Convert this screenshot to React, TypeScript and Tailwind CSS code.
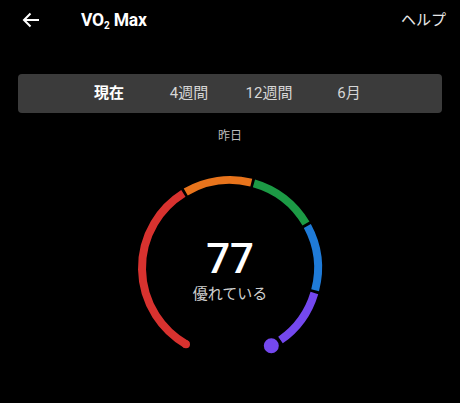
import React from 'react';

const FONT = "Roboto, 'Noto Sans CJK JP', sans-serif";

const CX = 100;
const CY = 100;
const R = 88;

function pt(deg: number) {
  const a = (deg * Math.PI) / 180;
  return [CX + R * Math.sin(a), CY - R * Math.cos(a)];
}

function arc(from: number, to: number) {
  const [x1, y1] = pt(from);
  const [x2, y2] = pt(to);
  const large = to - from > 180 ? 1 : 0;
  return `M ${x1.toFixed(2)} ${y1.toFixed(2)} A ${R} ${R} 0 ${large} 1 ${x2.toFixed(2)} ${y2.toFixed(2)}`;
}

const segments = [
  { from: -150, to: -32, color: '#d8322f' },
  { from: -30.2, to: 14, color: '#e8741c' },
  { from: 15.8, to: 59.7, color: '#1c9a45' },
  { from: 61.5, to: 104.7, color: '#1f7bd8' },
  { from: 106.5, to: 145, color: '#7448ee' },
];

function Gauge() {
  const [sx, sy] = pt(-150);
  const [dx, dy] = pt(152);
  return (
    <div className="relative mx-auto h-[200px] w-[200px]">
      <svg width="200" height="200" viewBox="0 0 200 200">
        {segments.map((s) => (
          <path key={s.color} d={arc(s.from, s.to)} stroke={s.color} strokeWidth={8} fill="none" />
        ))}
        <circle cx={sx} cy={sy} r={4} fill="#d8322f" />
        <circle cx={dx} cy={dy} r={9} fill="#7448ee" stroke="#000" strokeWidth={3} />
      </svg>
      <div className="absolute left-0 right-0 top-[70px] flex flex-col items-center">
        <div className="text-[42px] leading-[42px] font-medium text-white">77</div>
        <div className="mt-[4px] text-[15px] leading-[20px] text-[#cfcfcf]">優れている</div>
      </div>
    </div>
  );
}

export default function App() {
  const tabs = ['現在', '4週間', '12週間', '6月'];
  return (
    <div className="h-[403px] w-[460px] overflow-hidden bg-black text-white" style={{ fontFamily: FONT }}>
      <div className="flex h-[40px] items-center pl-[22px] pr-[14px]">
        <svg width="18" height="16" viewBox="0 0 18 16">
          <path d="M17 8 H2 M8.5 1.5 L2 8 L8.5 14.5" stroke="#fff" strokeWidth="2" fill="none" />
        </svg>
        <div className="ml-[41px] text-[17.5px] font-bold tracking-[-0.2px]">
          VO<span className="relative top-[3px] text-[10px]">2</span> Max
        </div>
        <div className="ml-auto text-[15px] text-[#e8e8e8]">ヘルプ</div>
      </div>

      <div className="mx-[18px] mt-[34px] flex h-[39px] items-center rounded-[4px] bg-[#3b3b3b] pl-[51px]">
        {tabs.map((t, i) => (
          <div
            key={t}
            className={
              i === 0
                ? 'w-[80px] text-center text-[15px] font-bold text-white'
                : 'w-[80px] text-center text-[15px] text-[#d6d6d6]'
            }
          >
            {t}
          </div>
        ))}
      </div>

      <div className="mt-[15px] text-center text-[12px] leading-[16px] text-[#bdbdbd]">昨日</div>

      <div className="mt-[24px]">
        <Gauge />
      </div>
    </div>
  );
}
